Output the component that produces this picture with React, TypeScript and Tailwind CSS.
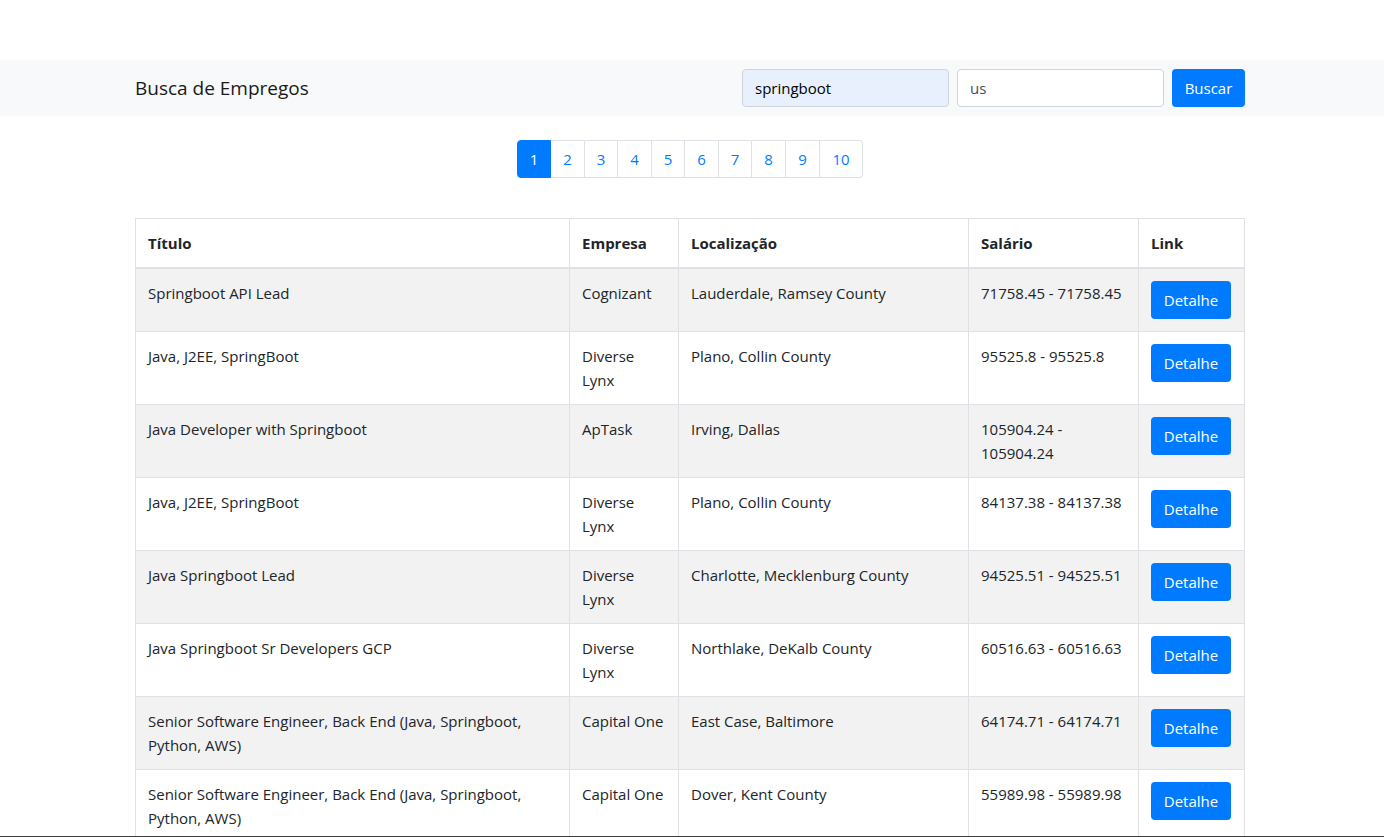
import React from "react";

type Row = {
  title: React.ReactNode;
  company: React.ReactNode;
  location: string;
  salary: React.ReactNode;
};

const rows: Row[] = [
  { title: "Springboot API Lead", company: "Cognizant", location: "Lauderdale, Ramsey County", salary: "71758.45 - 71758.45" },
  { title: "Java, J2EE, SpringBoot", company: <>Diverse<br />Lynx</>, location: "Plano, Collin County", salary: "95525.8 - 95525.8" },
  { title: "Java Developer with Springboot", company: "ApTask", location: "Irving, Dallas", salary: <>105904.24 -<br />105904.24</> },
  { title: "Java, J2EE, SpringBoot", company: <>Diverse<br />Lynx</>, location: "Plano, Collin County", salary: "84137.38 - 84137.38" },
  { title: "Java Springboot Lead", company: <>Diverse<br />Lynx</>, location: "Charlotte, Mecklenburg County", salary: "94525.51 - 94525.51" },
  { title: "Java Springboot Sr Developers GCP", company: <>Diverse<br />Lynx</>, location: "Northlake, DeKalb County", salary: "60516.63 - 60516.63" },
  { title: <>Senior Software Engineer, Back End (Java, Springboot,<br />Python, AWS)</>, company: "Capital One", location: "East Case, Baltimore", salary: "64174.71 - 64174.71" },
  { title: <>Senior Software Engineer, Back End (Java, Springboot,<br />Python, AWS)</>, company: "Capital One", location: "Dover, Kent County", salary: "55989.98 - 55989.98" },
];

const pageClass = [
  "flex h-[38px] w-[34px] items-center justify-center rounded-l border border-[#007bff] bg-[#007bff] text-white",
  "flex h-[38px] w-[34px] items-center justify-center border-y border-r border-[#dee2e6] bg-white text-[#007bff]",
  "flex h-[38px] w-[33px] items-center justify-center border-y border-r border-[#dee2e6] bg-white text-[#007bff]",
  "flex h-[38px] w-[34px] items-center justify-center border-y border-r border-[#dee2e6] bg-white text-[#007bff]",
  "flex h-[38px] w-[33px] items-center justify-center border-y border-r border-[#dee2e6] bg-white text-[#007bff]",
  "flex h-[38px] w-[34px] items-center justify-center border-y border-r border-[#dee2e6] bg-white text-[#007bff]",
  "flex h-[38px] w-[33px] items-center justify-center border-y border-r border-[#dee2e6] bg-white text-[#007bff]",
  "flex h-[38px] w-[34px] items-center justify-center border-y border-r border-[#dee2e6] bg-white text-[#007bff]",
  "flex h-[38px] w-[34px] items-center justify-center border-y border-r border-[#dee2e6] bg-white text-[#007bff]",
  "flex h-[38px] w-[43px] items-center justify-center rounded-r border-y border-r border-[#dee2e6] bg-white text-[#007bff]",
];

const pages = ["1", "2", "3", "4", "5", "6", "7", "8", "9", "10"];

const th = "border border-b-2 border-[#dee2e6] p-3 align-bottom font-bold";
const td = "whitespace-nowrap border border-[#dee2e6] p-3 align-top";

export default function App() {
  return (
    <div className="min-h-screen bg-white pt-[60px] font-['Open_Sans',sans-serif] text-[15px] leading-6 text-[#212529]">
      <nav className="h-[56px] bg-[#f8f9fa]">
        <div className="ml-[135px] flex h-full w-[1110px] items-center">
          <span className="text-[19px] leading-[30px] text-[#1a1a1a]">Busca de Empregos</span>
          <div className="ml-auto flex items-center gap-2">
            <div className="flex h-[38px] w-[207px] items-center rounded border border-[#ced4da] bg-[#e8f0fe] px-3 text-black">springboot</div>
            <div className="flex h-[38px] w-[207px] items-center rounded border border-[#ced4da] bg-white px-3 text-[#495057]">us</div>
            <button className="flex h-[38px] w-[73px] items-center justify-center rounded bg-[#007bff] text-white">Buscar</button>
          </div>
        </div>
      </nav>

      <div className="mt-6 flex justify-center">
        <div className="mr-[4px] flex">
          {pages.map((p, i) => (
            <div key={p} className={pageClass[i]}>
              {p}
            </div>
          ))}
        </div>
      </div>

      <div className="ml-[135px] mt-10 w-[1110px]">
        <table className="w-[1109px] table-fixed border-collapse border border-[#dee2e6] text-left">
          <thead>
            <tr>
              <th className={`w-[434px] ${th}`}>Título</th>
              <th className={`w-[109px] ${th}`}>Empresa</th>
              <th className={`w-[290px] ${th}`}>Localização</th>
              <th className={`w-[170px] ${th}`}>Salário</th>
              <th className={`w-[106px] ${th}`}>Link</th>
            </tr>
          </thead>
          <tbody>
            {rows.map((r, i) => (
              <tr key={i} className={i % 2 === 0 ? "bg-[#f2f2f2]" : "bg-white"}>
                <td className={td}>{r.title}</td>
                <td className={td}>{r.company}</td>
                <td className={td}>{r.location}</td>
                <td className={td}>{r.salary}</td>
                <td className="border border-[#dee2e6] p-3 align-top">
                  <button className="flex h-[38px] w-[80px] items-center justify-center rounded bg-[#007bff] text-white">Detalhe</button>
                </td>
              </tr>
            ))}
          </tbody>
        </table>
      </div>

      <div className="fixed bottom-0 left-0 h-px w-full bg-[#3c3c3c]" />
    </div>
  );
}
